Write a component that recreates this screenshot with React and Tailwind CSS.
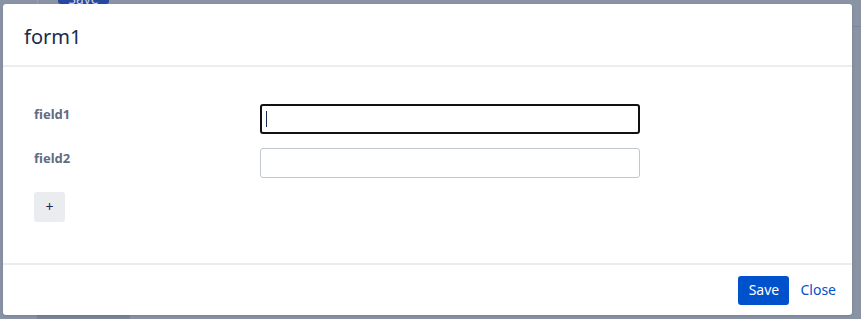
import { useState } from "react";

const font = { fontFamily: '"Noto Sans", "Open Sans", sans-serif' };

function Field({ label, focused }) {
  return (
    <div className="flex items-start">
      <label className="w-[226px] shrink-0 text-[13px] leading-5 font-bold text-[#5e6c84]">
        {label}
      </label>
      <div className="relative">
        <input
          className={`block w-[380px] h-[30px] rounded-[3px] bg-white px-2 text-sm text-[#172b4d] outline-none ${focused ? "border-2 border-[#111111]" : "border border-[#c1c7d0]"}`}
        />
        {focused && (
          <span className="absolute left-[6px] top-[7px] h-[16px] w-px bg-[#172b4d]" />
        )}
      </div>
    </div>
  );
}

export default function App() {
  const [fields] = useState(["field1", "field2"]);

  return (
    <div className="relative w-[861px] h-[319px] overflow-hidden bg-[#8993a4]" style={font}>
      {/* page behind the overlay */}
      <div className="absolute left-[37px] top-0 h-[4px] w-px bg-[#97a0b0]" />
      <div className="absolute left-[58px] top-[-20px] h-[24px] w-[51px] rounded-[3px] bg-[#27489c] text-center text-sm leading-[38px] text-[#c9d2e6]">
        Save
      </div>
      <div className="absolute right-0 top-[26px] h-px w-[8px] bg-[#7c869a]" />
      <div className="absolute bottom-0 left-[37px] h-[4px] w-[93px] bg-[#7b8599]" />

      {/* modal */}
      <div className="absolute left-[3px] top-[4px] flex h-[311px] w-[849px] flex-col rounded-[3px] bg-white shadow-sm">
        <div className="h-[61px] pl-[21px] pt-[21px]">
          <h2 className="text-[20px] leading-6 text-[#172b4d]">form1</h2>
        </div>
        <div className="h-[2px] bg-[#ebecf0]" />

        <div className="flex h-[196px] flex-col gap-[14px] pl-[31px] pt-[37px]">
          {fields.map((f, i) => (
            <Field key={f} label={f} focused={i === 0} />
          ))}
          <button className="flex h-[30px] w-[31px] items-center justify-center rounded-[3px] bg-[#ebecf0] text-sm text-[#172b4d]">
            +
          </button>
        </div>

        <div className="h-[2px] bg-[#ebecf0]" />
        <div className="flex h-[50px] items-center justify-end gap-[11px] pr-[16px]">
          <button className="h-[29px] w-[51px] rounded-[3px] bg-[#0052cc] text-sm text-white">
            Save
          </button>
          <button className="text-sm text-[#0052cc]">Close</button>
        </div>
      </div>
    </div>
  );
}
